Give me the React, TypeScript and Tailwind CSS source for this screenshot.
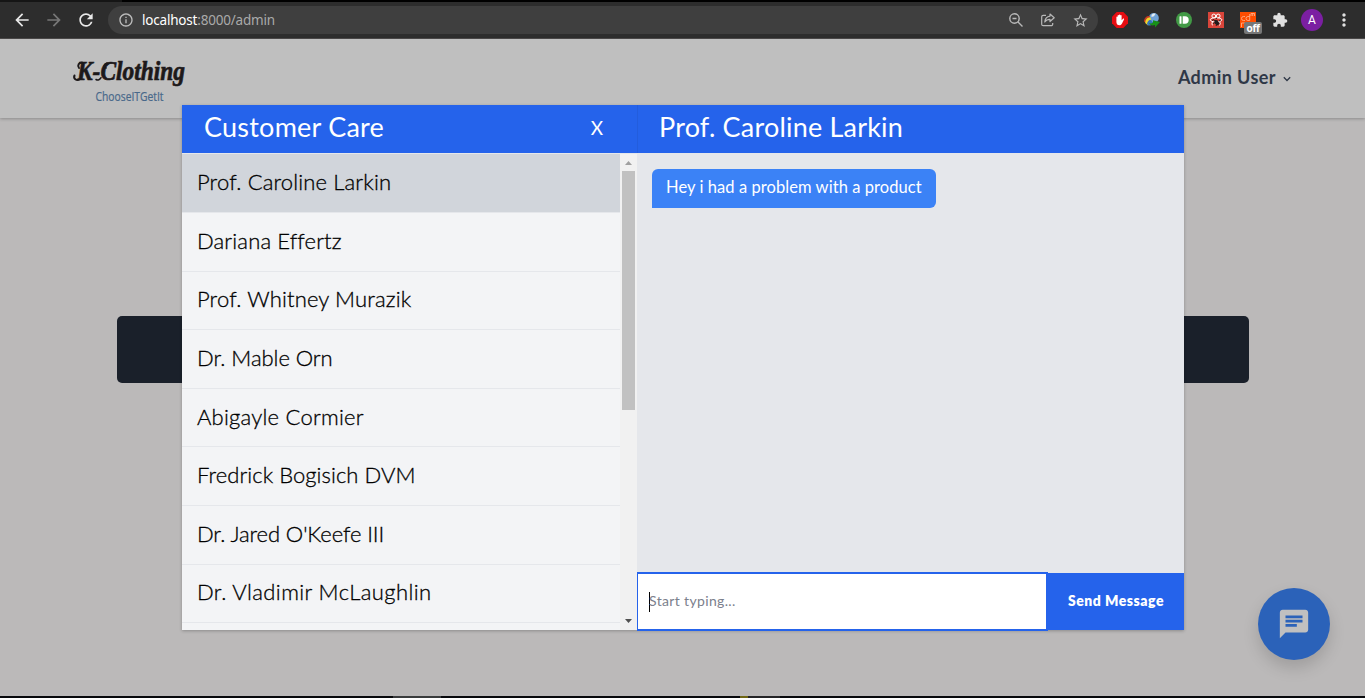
import React from "react";
import {
  MdArrowBack,
  MdArrowForward,
  MdChat,
  MdExtension,
  MdInfoOutline,
  MdMoreVert,
  MdRefresh,
  MdStarBorder,
} from "react-icons/md";

const customers = [
  { name: "Prof. Caroline Larkin", tracking: "tracking-[0.15px]" },
  { name: "Dariana Effertz", tracking: "tracking-[0.15px]" },
  { name: "Prof. Whitney Murazik", tracking: "tracking-[0.15px]" },
  { name: "Dr. Mable Orn", tracking: "tracking-[-0.04px]" },
  { name: "Abigayle Cormier", tracking: "tracking-[0.24px]" },
  { name: "Fredrick Bogisich DVM", tracking: "tracking-[0.06px]" },
  { name: "Dr. Jared O'Keefe III", tracking: "tracking-[-0.1px]" },
  { name: "Dr. Vladimir McLaughlin", tracking: "tracking-[0.4px]" },
];

function Extensions() {
  return (
    <div className="flex items-center gap-4">
      <svg className="size-4" viewBox="0 0 16 16">
        <path d="M4.7 0h6.6L16 4.7v6.6L11.300 16H4.700L0 11.300V4.700z" fill="#e60d12" />
        <path d="M4.400 8.600V5c0-.8 1.200-.8 1.200 0V3.600c0-.8 1.300-.8 1.300 0v-.5c0-.8 1.400-.8 1.400 0v.5c0-.8 1.300-.8 1.300 0v4.600l1.200-1.300c.7-.6 1.600-.2 1.200.6l-2 4c-.6 1.200-1.300 1.800-2.500 1.800-2 0-3.100-1.300-3.100-3.300z" fill="#fff" />
      </svg>
      <svg className="size-4" viewBox="0 0 16 16">
        <circle cx="9.800" cy="6" r="5" fill="#6fa2d6" />
        <path d="M7.500 3c1.500-1.700 3-1.700 4-1.200L10 4.200l-2.500.8z" fill="#e6eef2" />
        <path d="M0 9.500c0-4 3-6 6-5.500L5.500 6C3 6 2 8 2 11z" fill="#c63a22" />
        <path d="M1.200 11c0-4 2.300-6 5.300-5.500l.5 2.300c-2.500.2-2.800 2.200-1.800 3.700L4 13.500z" fill="#efd62e" />
        <path d="M3 12c.5-2.500 1.500-4 4-4l2 3-2 2.200C5 14 4 13.500 3 12z" fill="#3575bd" />
        <path d="M5 11c1.500.8 3 .5 4-.5V8.200l7 1.800-5 5.500v-2.500c-2.500 1-5 .5-6-2z" fill="#189018" />
      </svg>
      <svg className="size-4" viewBox="0 0 16 16">
        <circle cx="8" cy="8" r="8" fill="#429a46" />
        <rect x="3.500" y="4.300" width="2" height="7.400" rx=".5" fill="#fff" />
        <path d="M6.700 4.300H9a3.700 3.700 0 0 1 0 7.400H6.700z" fill="#fff" />
      </svg>
      <svg className="size-4" viewBox="0 0 16 16">
        <rect width="16" height="16" fill="#d9453a" />
        <g fill="none" stroke="#fff" strokeWidth="1">
          <circle cx="5.800" cy="4" r="1.900" />
          <circle cx="10.200" cy="4" r="1.900" />
          <ellipse cx="8" cy="7.800" rx="5.800" ry="2.200" />
          <path d="M4.500 9.800c-1 2-.5 3.200.5 3.600M11.500 9.800c1.200 1.500 1 2.800-.2 3.600" />
        </g>
        <path d="M6 7.800l3.500.5 2 3.200-1.500 2-3-1.500z" fill="#211b1b" />
        <path d="M5.500 7l-1 2M8 7l1-1.500M5 11.500l2-1M8 14l1-2M11 9l1.500-.5" stroke="#211b1b" />
      </svg>
      <div className="relative size-4 overflow-visible bg-[#ff4d00]">
        <svg className="size-4" viewBox="0 0 16 16">
          <g fill="none" stroke="#ffac86" strokeWidth=".9">
            <path d="M5 4.500H3.500a2 2 0 0 0 0 4H5M9.700 2v6.500H8a2 2 0 0 1 0-4h1.700M11 4V1.500h3.500V4M12.700 1.500V4M1.500 15v-4H5" />
          </g>
        </svg>
        <span className="absolute left-1 top-[10px] flex h-3 w-[18px] items-center justify-center rounded-[2px] bg-[#777] text-[10px] font-bold leading-none tracking-[-0.3px] text-white">
          off
        </span>
      </div>
      <MdExtension className="size-4 text-[#e0e0e0]" />
    </div>
  );
}

function BrowserBar() {
  return (
    <div className="h-[39px] shrink-0 border-b border-[#4e4c4c] bg-[#2d2d2d] font-['Noto_Sans','Open_Sans',sans-serif]">
      <div className="flex h-[2px]">
        <div className="w-[122px] bg-[#151515]" />
        <div className="flex-1 bg-black" />
      </div>
      <div className="flex h-9 items-center pl-3">
        <MdArrowBack className="size-5 text-[#e8e8e8]" />
        <MdArrowForward className="ml-3 size-5 text-[#777]" />
        <MdRefresh className="ml-3 size-5 text-[#e8e8e8]" />
        <div className="ml-3 flex h-7 w-[990px] items-center rounded-full bg-[#3f3f3f] pl-2.5 pr-[9px]">
          <MdInfoOutline className="size-4 text-[#bdbdbd]" />
          <span className="ml-2 flex-1 pt-px text-[13.500px] leading-none tracking-[-0.2px] text-[#aaa]">
            <span className="text-white">localhost</span>:8000/admin
          </span>
          <div className="flex items-center gap-4 text-[#b8b8b8]">
            <svg className="size-4" viewBox="0 0 16 16" fill="none" stroke="currentColor" strokeWidth="1.400">
              <circle cx="6.500" cy="6.500" r="4.700" />
              <path d="M10 10l4.500 4.500M4.500 6.500h4" />
            </svg>
            <svg className="size-4" viewBox="0 0 16 16" fill="none" stroke="currentColor" strokeWidth="1.200" strokeLinejoin="round">
              <path d="M6 3.300H3.200a1.500 1.500 0 0 0-1.500 1.500v7.400a1.500 1.500 0 0 0 1.500 1.500h8a1.500 1.500 0 0 0 1.500-1.500V11" />
              <path d="M10 2l4.200 3.800L10 9.500V7.400c-2.500 0-4 .8-5.200 2.600.3-3.400 2-5.500 5.200-5.900z" />
            </svg>
            <MdStarBorder className="size-[17px]" />
          </div>
        </div>
        <div className="ml-3.5">
          <Extensions />
        </div>
        <span className="ml-[13px] flex size-[22px] items-center justify-center rounded-full bg-[#7b1fa2] font-[Roboto,sans-serif] text-[12px] text-white">
          A
        </span>
        <MdMoreVert className="ml-[11px] size-5 text-[#e0e0e0]" />
      </div>
    </div>
  );
}

function SiteHeader() {
  return (
    <header className="flex h-[79px] shrink-0 items-center justify-between bg-[#bfbfbf] pl-[70px] pr-[74px] shadow-[0_1px_3px_rgba(0,0,0,0.25)]">
      <svg className="h-[60px] w-[120px] overflow-visible" viewBox="0 0 120 60">
        <text x="7" y="31" textLength="108" lengthAdjust="spacingAndGlyphs" fontFamily="Liberation Serif, serif" fontSize="28" fontWeight="bold" fontStyle="italic" fill="#1d191a" stroke="#1d191a" strokeWidth=".7">
          K-Clothing
        </text>
        <g fill="none" stroke="#1d191a" strokeLinecap="round">
          <path d="M10 30c-3 2.500-7 0-5.500-3.500M12 13.500c-3 0-5 3-3 5.500" strokeWidth="2" />
          <path d="M26 30.500c2 1.200 4 0 5-1.800M37 14c-3 1-4 4-1 5" strokeWidth="1.500" />
        </g>
        <text x="25.500" y="52" textLength="68" lengthAdjust="spacingAndGlyphs" fontFamily="Open Sans, sans-serif" fontSize="12" fill="#48688a" stroke="#48688a" strokeWidth=".2">
          ChooseITGetIt
        </text>
      </svg>
      <div className="flex items-center text-[#2f3847]">
        <span className="pb-0.5 text-[18px] font-bold tracking-[0.42px]">Admin User</span>
        <svg className="ml-[7px] size-2" viewBox="0 0 8 8" fill="none" stroke="currentColor" strokeWidth="1.300">
          <path d="M.8 2.300L4 5.500l3.200-3.200" />
        </svg>
      </div>
    </header>
  );
}

function CustomerList() {
  return (
    <section className="flex w-[455px] flex-col">
      <div className="flex h-12 items-center justify-between bg-[#2563eb] pb-[5px] pl-[22px] pr-[34px] text-white">
        <h2 className="text-[27px] leading-none tracking-[0.23px]">Customer Care</h2>
        <button className="pt-[2px] text-[19px] leading-none">X</button>
      </div>
      <div className="flex min-h-0 flex-1">
        <ul className="flex-1 overflow-hidden border-t border-[#e5e7eb]">
          {customers.map((c, i) => (
            <li
              key={c.name}
              className={`flex items-center border-b border-[#e5e7eb] pb-[3px] pl-[15px] text-[22px] font-light text-black [-webkit-text-stroke:0.3px_black] ${c.tracking} ${i === 0 ? "h-[59px] bg-[#d1d5db]" : "h-[58.600px] bg-[#f3f4f6]"}`}
            >
              {c.name}
            </li>
          ))}
          <li className="h-10 bg-[#f3f4f6]" />
        </ul>
        <div className="flex w-[17px] flex-col items-center border-t border-[#e5e7eb] bg-[#f1f1f1]">
          <svg className="h-[17px] w-[17px] shrink-0" viewBox="0 0 17 17">
            <path d="M5 11l3.500-4L12 11z" fill="#a0a0a0" />
          </svg>
          <div className="h-[239px] w-[13px] bg-[#c1c1c1]" />
          <svg className="mt-auto h-[17px] w-[17px] shrink-0" viewBox="0 0 17 17">
            <path d="M5 6l3.500 4L12 6z" fill="#505050" />
          </svg>
        </div>
      </div>
    </section>
  );
}

function Conversation() {
  return (
    <section className="flex w-[547px] flex-col bg-[#e5e7eb]">
      <div className="flex h-12 items-center border-l border-[#235ddd] bg-[#2563eb] pb-[5px] pl-[21px] text-white">
        <h2 className="text-[27px] leading-none tracking-[0.2px]">Prof. Caroline Larkin</h2>
      </div>
      <div className="flex-1 px-[15px] pt-4">
        <p className="flex h-[39px] w-[284px] items-center rounded-[6px] rounded-bl-none bg-[#3b82f6] pb-[3px] pl-3.5 text-[16.500px] tracking-[0.07px] text-white">
          Hey i had a problem with a product
        </p>
      </div>
      <div className="flex h-[57px]">
        <div className="-my-px flex w-[411px] items-center border-2 border-l border-[#2563eb] bg-white pl-[11px] text-[14px] text-[#7b808c]">
          <span className="h-5 w-px bg-black" />
          <span className="-ml-px pb-0.5 tracking-[0.35px]">Start typing...</span>
        </div>
        <button className="flex-1 bg-[#2563eb] pb-0.5 text-[14px] font-extrabold tracking-[0.5px] text-white">
          Send Message
        </button>
      </div>
    </section>
  );
}

export default function App() {
  return (
    <div className="relative flex h-[698px] w-[1365px] flex-col overflow-hidden bg-[#bbb9b9] font-[Lato,sans-serif]">
      <BrowserBar />
      <SiteHeader />
      <main className="flex-1 px-[117px] pt-[198px] pr-[116px]">
        <div className="h-[67px] rounded-[5px] bg-[#1a202a]" />
      </main>
      <div className="flex h-[2px] shrink-0 bg-[#08090c]">
        <div className="ml-[393px] w-12 bg-[#3a3c3d]" />
        <div className="ml-[299px] w-2 bg-[#6f6615]" />
        <div className="w-8 bg-[#252527]" />
      </div>
      <div className="absolute left-[182px] top-[105px] flex h-[525px] w-[1002px] shadow-[0_1px_3px_rgba(0,0,0,0.25)]">
        <CustomerList />
        <Conversation />
      </div>
      <button className="absolute left-[1258px] top-[588px] flex size-[72px] items-center justify-center rounded-full bg-[#2b62b9] text-[#c0c0c0] shadow-[0_8px_16px_rgba(0,0,0,0.15)]">
        <MdChat className="size-[34px]" />
      </button>
    </div>
  );
}
